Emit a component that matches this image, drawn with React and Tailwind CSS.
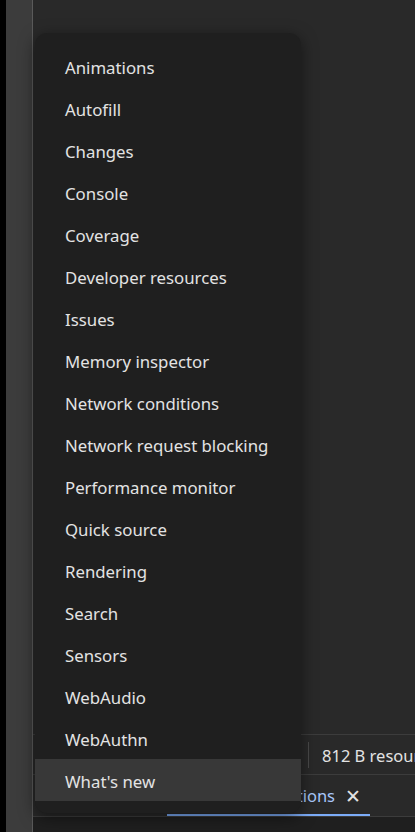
const items = [
  "Animations",
  "Autofill",
  "Changes",
  "Console",
  "Coverage",
  "Developer resources",
  "Issues",
  "Memory inspector",
  "Network conditions",
  "Network request blocking",
  "Performance monitor",
  "Quick source",
  "Rendering",
  "Search",
  "Sensors",
  "WebAudio",
  "WebAuthn",
  "What's new",
];

export default function App() {
  return (
    <div
      className="relative flex h-[832px] w-[415px] overflow-hidden bg-[#292929] text-[#e3e3e3]"
      style={{ fontFamily: '"Noto Sans", "Open Sans", sans-serif' }}
    >
      {/* left gutter */}
      <div className="w-[6px] shrink-0 bg-black" />
      <div className="w-[26px] shrink-0 bg-[#3c3c3c]" />
      <div className="w-px shrink-0 bg-[#5a5a5a]" />

      {/* main column */}
      <div className="flex flex-1 flex-col">
        <div className="h-[734px]" />
        <div className="h-px bg-[#3c3c3c]" />
        <div className="flex h-[39px] items-center overflow-hidden pl-[275px] text-[16.5px]">
          <div className="mr-[13px] h-[26px] w-px shrink-0 bg-[#4a4a4a]" />
          <span className="whitespace-nowrap pt-[4px]">812 B resources</span>
        </div>
        <div className="h-px bg-[#3c3c3c]" />
        <div className="flex h-[41px] items-end bg-[#292929]">
          <div className="ml-[134px] flex h-full w-[203px] flex-col">
            <div className="flex flex-1 items-center justify-end gap-[10px] pr-[9px] pt-[3px] text-[16.5px] text-[#a8c7fa]">
              <span>Animations</span>
              <span className="text-[19px] leading-none text-[#e3e3e3]">✕</span>
            </div>
            <div className="h-[2px] bg-[#7cacf8]" />
          </div>
        </div>
        <div className="h-px bg-[#3c3c3c]" />
        <div className="flex-1 bg-[#1f1f1f]" />
      </div>

      {/* dropdown menu */}
      <div className="absolute left-[35px] top-[33px] w-[266px] rounded-[12px] bg-[#1f1f1f] py-[12px] shadow-[0_4px_16px_rgba(0,0,0,0.5)]">
        {items.map((label) => (
          <div
            key={label}
            className={
              "flex h-[42px] items-center pl-[30px] pt-[3px] text-[16.8px] " +
              (label === "What's new" ? "bg-[#383838]" : "")
            }
          >
            {label}
          </div>
        ))}
      </div>
    </div>
  );
}
